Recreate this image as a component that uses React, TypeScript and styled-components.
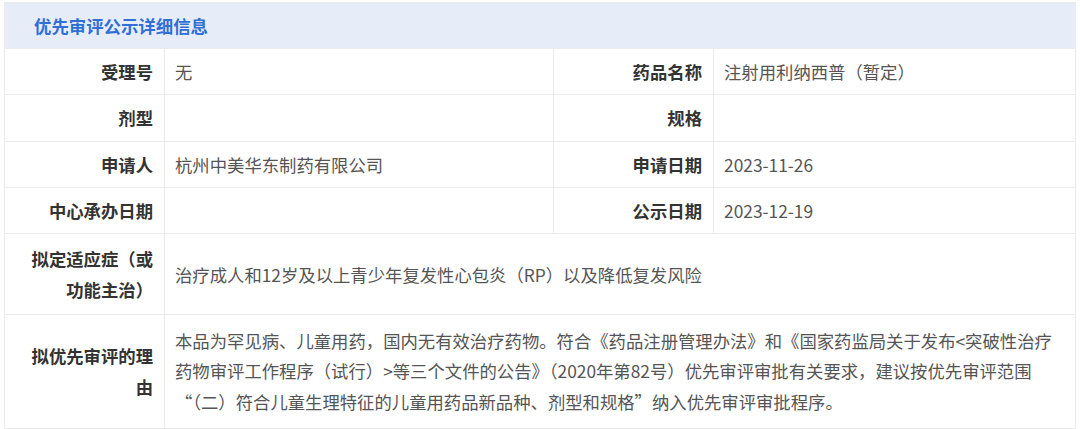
import React from 'react';
import styled, { createGlobalStyle } from 'styled-components';

const GlobalStyle = createGlobalStyle`
  html, body {
    margin: 0;
    padding: 0;
    background: #ffffff;
  }
  body {
    font-family: "Noto Sans CJK SC", "Noto Sans", sans-serif;
  }
`;

const Page = styled.div`
  padding: 2px 4px;
`;

const Table = styled.table`
  width: 1071px;
  border-collapse: collapse;
  table-layout: fixed;
  border: 1px solid #ebebeb;
  font-size: 17.35px;
`;

const Head = styled.th`
  height: 45px;
  padding: 0 0 0 29px;
  text-align: left;
  background: #e7edf8;
  color: #2f6fd6;
  font-size: 17.4px;
  font-weight: 700;
  border: 1px solid #ebebeb;
`;

const Label = styled.td<{ $tall?: boolean }>`
  height: ${(p) => (p.$tall ? 'auto' : '45.3px')};
  padding: ${(p) => (p.$tall ? '9px 11px 9px 14px' : '0 11px 0 14px')};
  text-align: right;
  vertical-align: middle;
  color: #333333;
  font-weight: 700;
  line-height: 31px;
  border: 1px solid #ebebeb;
`;

const Value = styled.td<{ $tall?: boolean }>`
  height: ${(p) => (p.$tall ? 'auto' : '45.3px')};
  padding: ${(p) => (p.$tall ? '9px 8px 9px 10px' : '0 8px 0 10px')};
  text-align: left;
  vertical-align: middle;
  color: #555555;
  line-height: 31px;
  border: 1px solid #ebebeb;
`;

const Paragraph = styled(Value)`
  padding: 10.5px 8px 10.5px 10px;
  line-height: 30.5px;
`;

type Pair = [string, string];

const shortRows: [Pair, Pair][] = [
  [['受理号', '无'], ['药品名称', '注射用利纳西普（暂定）']],
  [['剂型', ''], ['规格', '']],
  [['申请人', '杭州中美华东制药有限公司'], ['申请日期', '2023-11-26']],
  [['中心承办日期', ''], ['公示日期', '2023-12-19']],
];

const indication = '治疗成人和12岁及以上青少年复发性心包炎（RP）以及降低复发风险';

const reason =
  '本品为罕见病、儿童用药，国内无有效治疗药物。符合《药品注册管理办法》和《国家药监局关于发布<突破性治疗药物审评工作程序（试行）>等三个文件的公告》（2020年第82号）优先审评审批有关要求，建议按优先审评范围\u200b“（二）符合儿童生理特征的儿童用药品新品种、剂型和规格”纳入优先审评审批程序。';

export default function App() {
  return (
    <Page>
      <GlobalStyle />
      <Table>
        <colgroup>
          <col style={{ width: 160 }} />
          <col style={{ width: 389 }} />
          <col style={{ width: 160 }} />
          <col style={{ width: 362 }} />
        </colgroup>
        <thead>
          <tr>
            <Head colSpan={4}>优先审评公示详细信息</Head>
          </tr>
        </thead>
        <tbody>
          {shortRows.map(([left, right]) => (
            <tr key={left[0]}>
              <Label>{left[0]}</Label>
              <Value>{left[1]}</Value>
              <Label>{right[0]}</Label>
              <Value>{right[1]}</Value>
            </tr>
          ))}
          <tr>
            <Label $tall>拟定适应症（或功能主治）</Label>
            <Value $tall colSpan={3}>
              {indication}
            </Value>
          </tr>
          <tr>
            <Label $tall>拟优先审评的理由</Label>
            <Paragraph colSpan={3}>{reason}</Paragraph>
          </tr>
        </tbody>
      </Table>
    </Page>
  );
}
